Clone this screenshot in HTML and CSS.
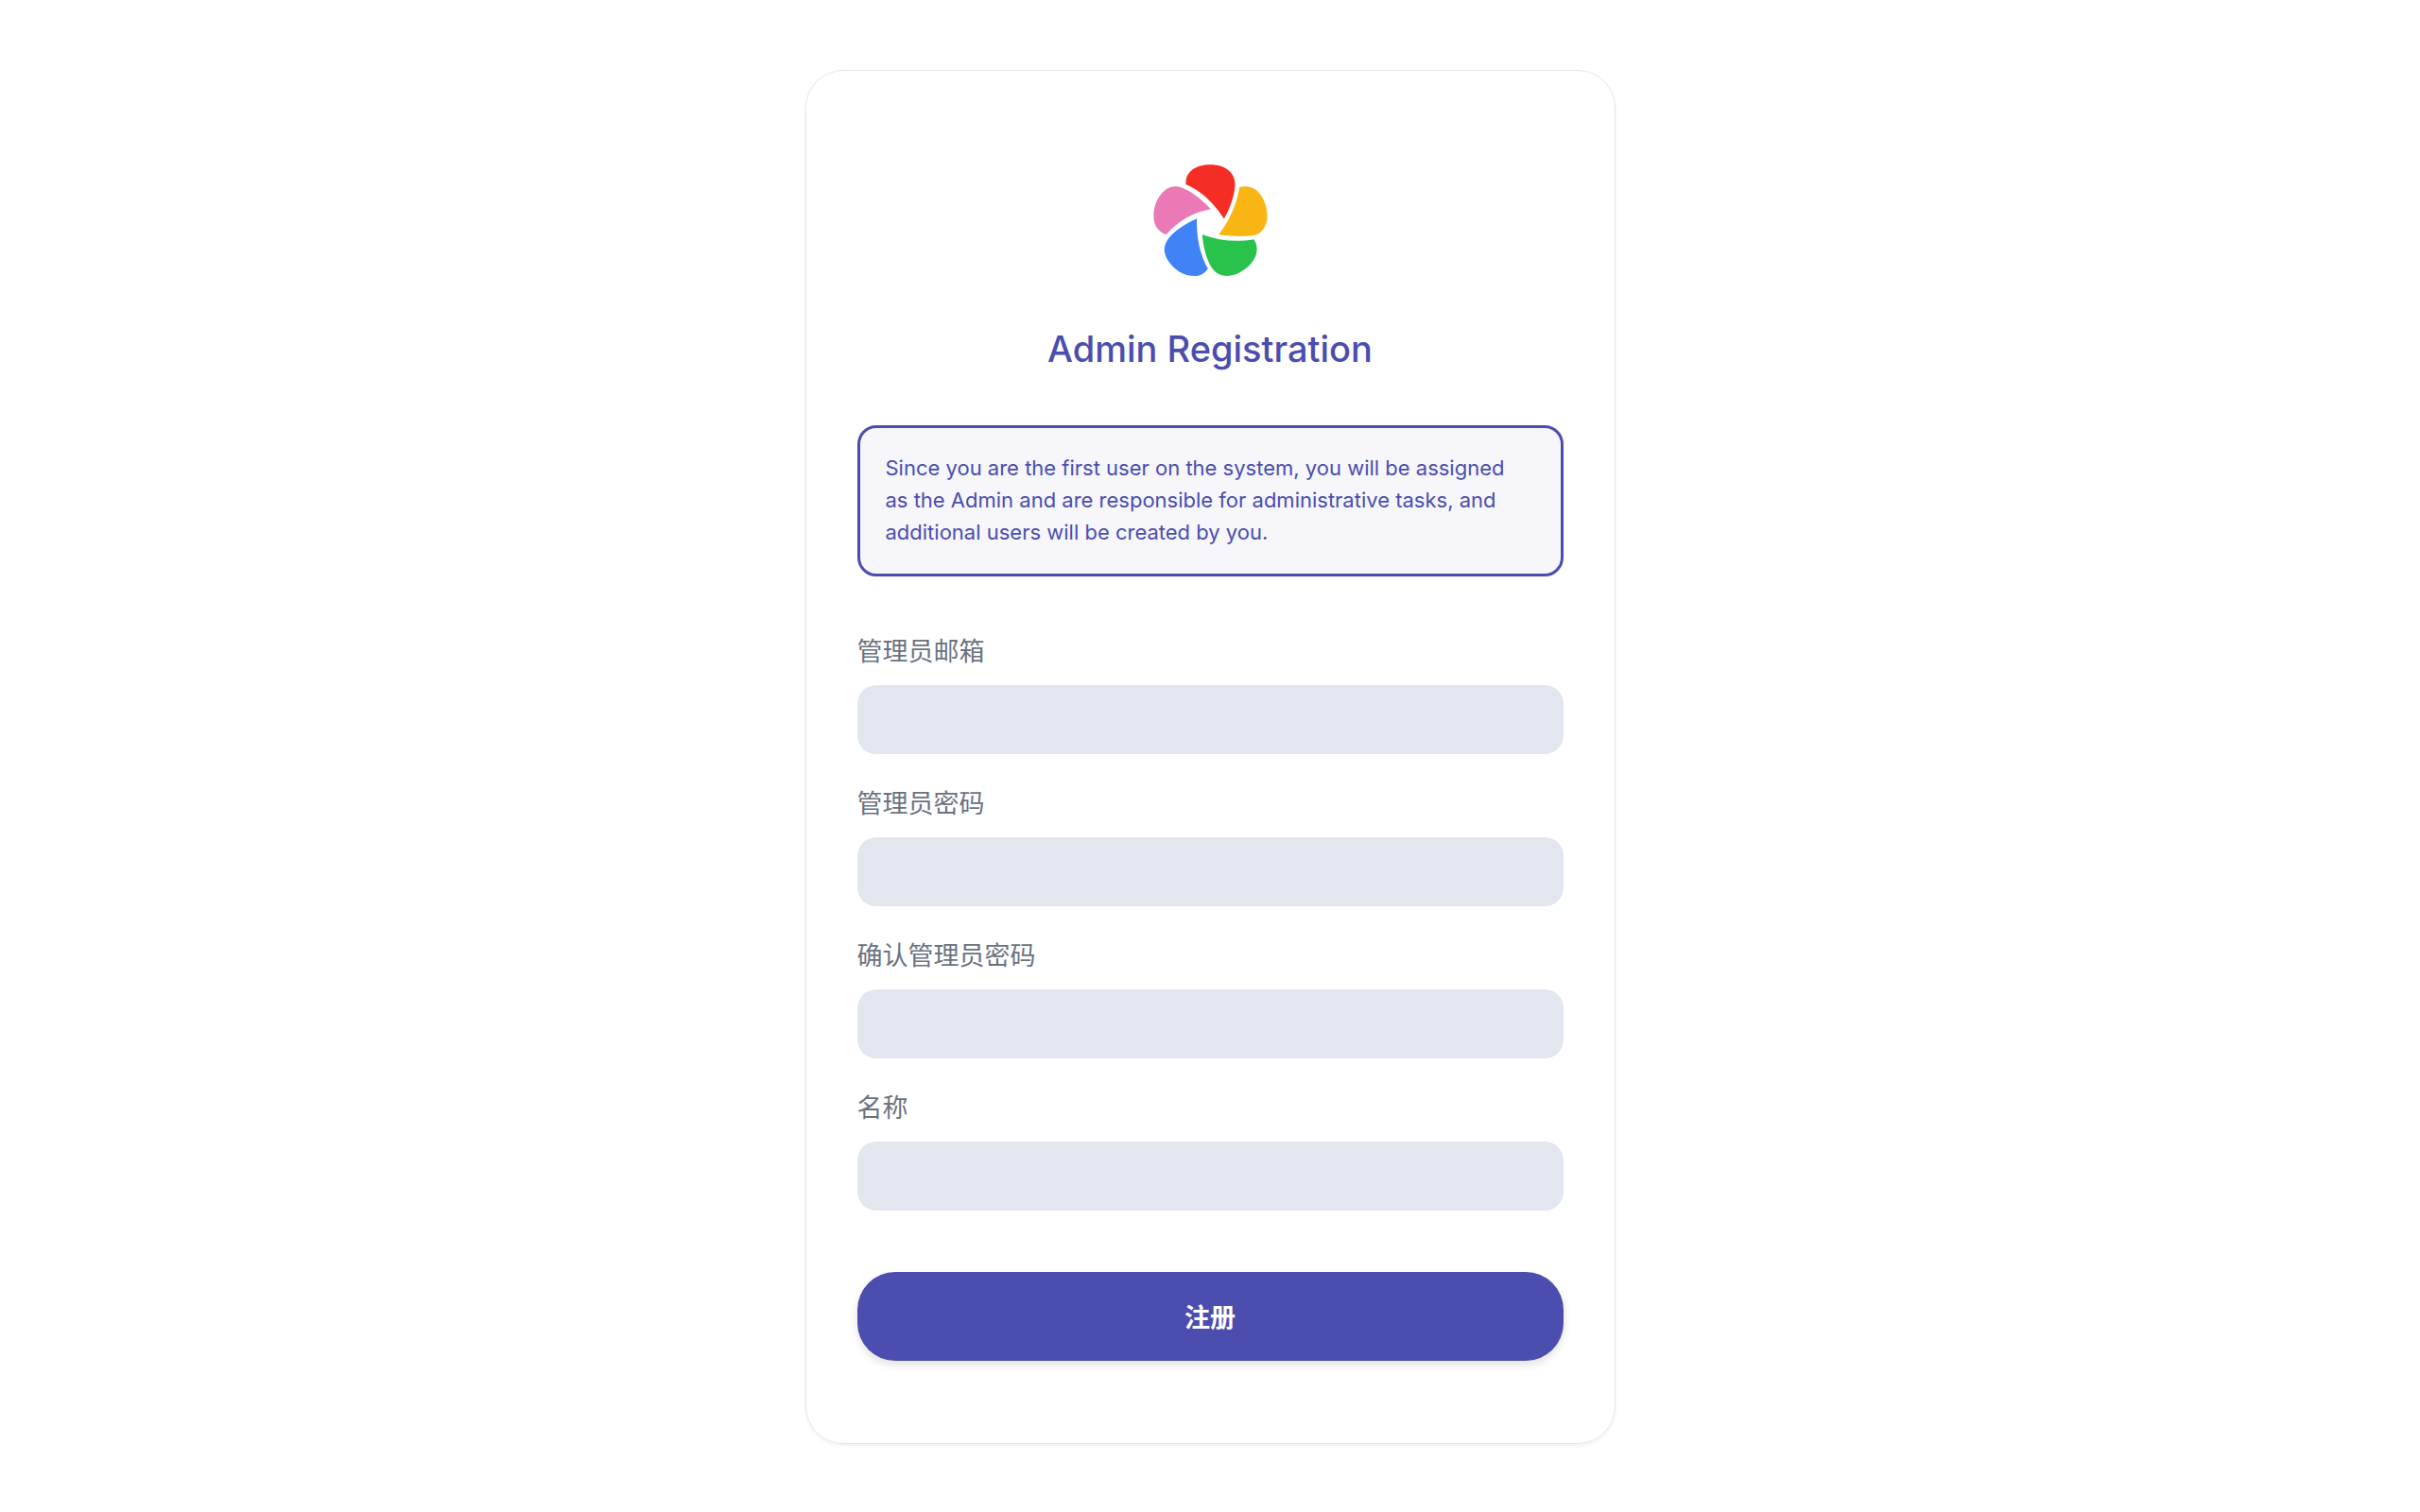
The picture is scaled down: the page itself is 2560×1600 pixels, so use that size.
FILE: index.html
```html
<!DOCTYPE html>
<html lang="zh-CN">
<head>
<meta charset="utf-8">
<meta name="viewport" content="width=device-width, initial-scale=1">
<title>Admin Registration</title>
<link rel="stylesheet" href="styles.css">
</head>
<body>
<main class="card">
  <svg class="logo" viewBox="60 41 362 355" aria-hidden="true">
    <path fill="#f52d24" d="M163 104C161 64 193 42 241 42C288 42 319 67 319 105C317 141 303 178 284 213C251 163 213 125 163 104Z"/>
    <path fill="#f9b513" d="M333 113C364 106 386 116 403 142C416 164 421 187 421 207C420 238 401 263 376 266C341 270 301 268 267 263C300 220 323 172 333 113Z"/>
    <path fill="#29c24a" d="M215 263C266 282 324 288 378 278C397 306 388 338 360 364C333 389 296 402 267 388C236 373 219 314 215 263Z"/>
    <path fill="#4083f7" d="M198 212C196 269 207 326 233 371C220 392 195 399 166 391C133 382 102 350 96 320C88 277 139 239 198 212Z"/>
    <path fill="#eb79b5" d="M242 182C190 192 139 219 101 263C75 254 61 233 61 203C61 158 91 113 124 111C158 107 207 146 242 182Z"/>
  </svg>
  <h1 class="title">Admin Registration</h1>
  <p class="notice">Since you are the first user on the system, you will be assigned as the Admin and are responsible for administrative tasks, and additional users will be created by you.</p>
  <form class="form">
    <div class="field">
      <label for="email">管理员邮箱</label>
      <input id="email" type="email" autocomplete="email">
    </div>
    <div class="field">
      <label for="password">管理员密码</label>
      <input id="password" type="password" autocomplete="new-password">
    </div>
    <div class="field">
      <label for="confirm">确认管理员密码</label>
      <input id="confirm" type="password" autocomplete="new-password">
    </div>
    <div class="field">
      <label for="name">名称</label>
      <input id="name" type="text" autocomplete="name">
    </div>
    <button class="submit" type="submit">注册</button>
  </form>
</main>
</body>
</html>
```

FILE: styles.css
```css
* {
  box-sizing: border-box;
}

body {
  min-height: 100vh;
  margin: 0;
  padding-top: 2px;
  display: flex;
  align-items: center;
  justify-content: center;
  background: #fff;
  color: #4b4daf;
  font-family: Inter, "Noto Sans CJK SC", sans-serif;
}

.card {
  width: 100%;
  max-width: 857px;
  padding: 99px 54px 87px;
  display: flex;
  flex-direction: column;
  border: 1px solid #e5e7eb;
  border-radius: 40px;
  box-shadow: 0 2px 4px rgba(0, 0, 0, 0.06);
}

.logo {
  width: 121px;
  align-self: center;
}

.title {
  margin: 52px 0 57px;
  font-size: 38px;
  line-height: 48px;
  font-weight: 500;
  text-align: center;
}

.notice {
  margin: 0;
  padding: 25px 40px 27px 27px;
  border: 3px solid #4b4daf;
  border-radius: 20px;
  background: #f6f6fb;
  font-size: 22px;
  line-height: 34px;
}

.form {
  margin-top: 59px;
  display: flex;
  flex-direction: column;
  gap: 32px;
}

.field {
  display: flex;
  flex-direction: column;
  gap: 14px;
}

.field label {
  color: #6b7280;
  font-size: 27px;
  line-height: 42px;
}

.field input {
  width: 100%;
  height: 73px;
  padding: 0 20px;
  border: 0;
  border-radius: 20px;
  background: #e2e6ef;
  font: inherit;
  font-size: 27px;
}

.submit {
  height: 94px;
  margin-top: 33px;
  border: 0;
  border-radius: 40px;
  background: #4b4daf;
  box-shadow: 0 4px 10px rgba(0, 0, 0, 0.12);
  color: #fff;
  font: inherit;
  font-size: 27px;
  font-weight: 700;
  cursor: pointer;
}
```
